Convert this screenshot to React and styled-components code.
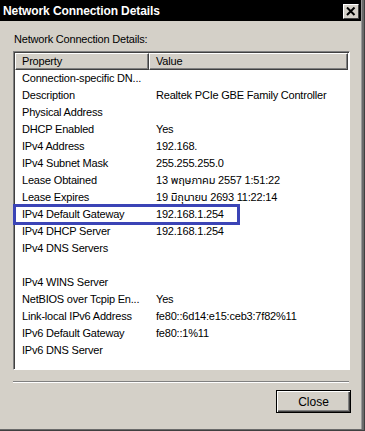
import React from "react";
import styled, { createGlobalStyle } from "styled-components";

const Global = createGlobalStyle`
  html, body { margin: 0; padding: 0; background: #d4d0c8; }
  * { box-sizing: border-box; }
  body { font-family: "Liberation Sans", "Noto Sans Thai", "Noto Sans", sans-serif; font-size: 11px; color: #000; }
`;

const Window = styled.div`
  width: 365px;
  height: 431px;
  background: #d4d0c8;
  display: flex;
  flex-direction: column;
  border-right: 1px solid #404040;
  border-bottom: 1px solid #404040;
  box-shadow: inset -2px -1px 0 #6a6a6a, inset -3px -1px 0 #9a9a9a;
`;

const TitleBar = styled.div`
  height: 21px;
  margin-right: 3px;
  background: #000;
  color: #fff;
  display: flex;
  align-items: center;
  justify-content: space-between;
  padding: 0 2px 0 3px;
  font-weight: bold;
  font-size: 12px;
  letter-spacing: -0.1px;
`;

const CloseX = styled.div`
  width: 16px;
  height: 15px;
  margin-top: 1px;
  background: #d4d0c8;
  border-top: 1px solid #fff;
  border-left: 1px solid #fff;
  border-right: 1px solid #404040;
  border-bottom: 1px solid #404040;
  display: flex;
  align-items: center;
  justify-content: center;
`;

const Body = styled.div`
  flex: 1;
  display: flex;
  flex-direction: column;
  padding: 11px 14px 0 13px;
`;

const Label = styled.div`
  height: 19px;
  padding-left: 1px;
  line-height: 14px;
  letter-spacing: -0.2px;
`;

const ListBox = styled.div`
  height: 319px;
  background: #fff;
  border-top: 1px solid #808080;
  border-left: 1px solid #808080;
  border-right: 1px solid #fff;
  border-bottom: 1px solid #fff;
  box-shadow: inset 1px 1px 0 #404040;
  padding: 1px 0 0 1px;
  display: flex;
  flex-direction: column;
`;

const Header = styled.div`
  display: grid;
  grid-template-columns: 134px 1fr;
  height: 17px;
  margin-right: 1px;
`;

const HeaderCell = styled.div`
  background: #d4d0c8;
  border-top: 1px solid #fff;
  border-left: 1px solid #fff;
  border-right: 1px solid #404040;
  border-bottom: 1px solid #404040;
  box-shadow: inset -1px -1px 0 #808080;
  padding-left: 6px;
  line-height: 14px;
  letter-spacing: -0.2px;
`;

const Row = styled.div`
  position: relative;
  display: grid;
  grid-template-columns: 134px 1fr;
  height: 17px;
  line-height: 17px;
  letter-spacing: -0.2px;
`;

const Cell = styled.div`
  padding-left: 7px;
  white-space: nowrap;
  overflow: hidden;
`;

const Mark = styled.div`
  position: absolute;
  left: -2px;
  top: -2px;
  width: 227px;
  height: 21px;
  border: 3px solid #3b44b6;
  pointer-events: none;
`;

const Separator = styled.div`
  margin-top: 11px;
  height: 2px;
  border-top: 1px solid #808080;
  border-bottom: 1px solid #fff;
  margin-right: 1px;
`;

const Footer = styled.div`
  display: flex;
  justify-content: flex-end;
  padding-top: 7px;
`;

const Button = styled.button`
  width: 75px;
  height: 23px;
  background: #d4d0c8;
  border: 1px solid #000;
  box-shadow: inset 1px 1px 0 #fff, inset -1px -1px 0 #404040, inset -2px -2px 0 #808080;
  font-family: inherit;
  font-size: 12px;
  padding: 0;
  color: #000;
  margin-right: -1px;
`;

const rows = [
  ["Connection-specific DN...", ""],
  ["Description", "Realtek PCIe GBE Family Controller"],
  ["Physical Address", ""],
  ["DHCP Enabled", "Yes"],
  ["IPv4 Address", "192.168."],
  ["IPv4 Subnet Mask", "255.255.255.0"],
  ["Lease Obtained", "13 พฤษภาคม 2557 1:51:22"],
  ["Lease Expires", "19 มิถุนายน 2693 11:22:14"],
  ["IPv4 Default Gateway", "192.168.1.254", true],
  ["IPv4 DHCP Server", "192.168.1.254"],
  ["IPv4 DNS Servers", ""],
  ["", ""],
  ["IPv4 WINS Server", ""],
  ["NetBIOS over Tcpip En...", "Yes"],
  ["Link-local IPv6 Address", "fe80::6d14:e15:ceb3:7f82%11"],
  ["IPv6 Default Gateway", "fe80::1%11"],
  ["IPv6 DNS Server", ""],
];

export default function App() {
  return (
    <>
      <Global />
      <Window>
        <TitleBar>
          <span>Network Connection Details</span>
          <CloseX>
            <svg width="10" height="9" viewBox="0 0 10 9">
              <path d="M1 0.5 L8.5 8 M8.5 0.5 L1 8" stroke="#000" strokeWidth="2" fill="none" />
            </svg>
          </CloseX>
        </TitleBar>
        <Body>
          <Label>Network Connection Details:</Label>
          <ListBox>
            <Header>
              <HeaderCell>Property</HeaderCell>
              <HeaderCell>Value</HeaderCell>
            </Header>
            {rows.map(([k, v, mark], i) => (
              <Row key={i}>
                <Cell>{k}</Cell>
                <Cell>{v}</Cell>
                {mark && <Mark />}
              </Row>
            ))}
          </ListBox>
          <Separator />
          <Footer>
            <Button>Close</Button>
          </Footer>
        </Body>
      </Window>
    </>
  );
}
